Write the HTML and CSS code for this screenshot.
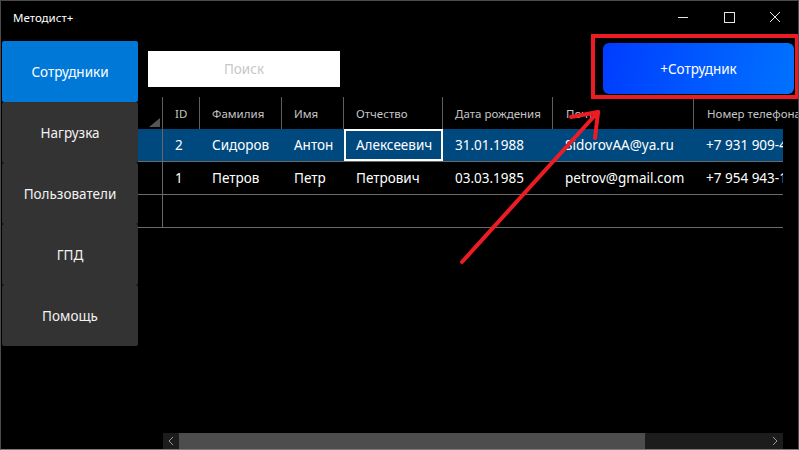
FILE: index.html
```html
<!DOCTYPE html>
<html lang="ru">
<head>
<meta charset="utf-8">
<title>Методист+</title>
<link rel="stylesheet" href="styles.css">
</head>
<body>
<div class="window">
  <header class="titlebar">
    <span class="app-title">Методист+</span>
    <div class="controls">
      <span class="ctl"><svg width="46" height="31" viewBox="0 0 46 31"><line x1="18" y1="16.5" x2="28" y2="16.5"/></svg></span>
      <span class="ctl"><svg width="46" height="31" viewBox="0 0 46 31"><rect x="18.5" y="11.5" width="10" height="10"/></svg></span>
      <span class="ctl"><svg width="46" height="31" viewBox="0 0 46 31"><line x1="18" y1="11" x2="28" y2="21"/><line x1="28" y1="11" x2="18" y2="21"/></svg></span>
    </div>
  </header>
  <div class="main">
    <nav class="sidebar">
      <div class="nav-btn active">Сотрудники</div>
      <div class="nav-btn">Нагрузка</div>
      <div class="nav-btn">Пользователи</div>
      <div class="nav-btn">ГПД</div>
      <div class="nav-btn">Помощь</div>
    </nav>
    <section class="content">
      <div class="toolbar">
        <div class="search">Поиск</div>
        <div class="add-btn">+Сотрудник</div>
      </div>
      <div class="grid">
        <div class="row head">
          <div class="cell rh"><span class="corner"></span></div>
          <div class="cell c-id">ID</div>
          <div class="cell c-fam">Фамилия</div>
          <div class="cell c-name">Имя</div>
          <div class="cell c-otch">Отчество</div>
          <div class="cell c-date">Дата рождения</div>
          <div class="cell c-mail">Почта</div>
          <div class="cell c-tel">Номер телефона</div>
        </div>
        <div class="row data selected">
          <div class="cell rh"></div>
          <div class="cell c-id">2</div>
          <div class="cell c-fam">Сидоров</div>
          <div class="cell c-name">Антон</div>
          <div class="cell c-otch focus">Алексеевич</div>
          <div class="cell c-date">31.01.1988</div>
          <div class="cell c-mail">SidorovAA@ya.ru</div>
          <div class="cell c-tel">+7 931 909-44-21</div>
        </div>
        <div class="row data">
          <div class="cell rh"></div>
          <div class="cell c-id">1</div>
          <div class="cell c-fam">Петров</div>
          <div class="cell c-name">Петр</div>
          <div class="cell c-otch">Петрович</div>
          <div class="cell c-date">03.03.1985</div>
          <div class="cell c-mail">petrov@gmail.com</div>
          <div class="cell c-tel">+7 954 943-12-05</div>
        </div>
        <div class="row data">
          <div class="cell rh"></div>
        </div>
      </div>
      <div class="hscroll">
        <span class="arr">
          <svg width="16" height="16" viewBox="0 0 16 16"><polyline points="10,4 6,8 10,12"/></svg>
        </span>
        <span class="thumb"></span>
        <span class="track"></span>
        <span class="arr">
          <svg width="16" height="16" viewBox="0 0 16 16"><polyline points="6,4 10,8 6,12"/></svg>
        </span>
      </div>
    </section>
  </div>
  <div class="annot-box"></div>
  <svg class="annot-arrow" width="799" height="450" viewBox="0 0 799 450">
    <line x1="462" y1="262" x2="598" y2="112"/>
    <line x1="571" y1="117" x2="598" y2="112"/>
    <line x1="595" y1="138" x2="598" y2="112"/>
  </svg>
</div>
</body>
</html>
```

FILE: styles.css
```css
* { box-sizing: border-box; }

html, body {
  margin: 0;
  padding: 0;
  background: #000;
}

body {
  font-family: "Noto Sans", "Open Sans", "DejaVu Sans", sans-serif;
  color: #fff;
}

.window {
  position: relative;
  width: 799px;
  height: 450px;
  border: 1px solid #4a4a4a;
  border-bottom-color: #7a7a7a;
  background: #000;
  overflow: hidden;
  display: flex;
  flex-direction: column;
}

/* title bar */
.titlebar {
  height: 31px;
  display: flex;
  align-items: center;
  justify-content: space-between;
  flex-shrink: 0;
}

.app-title {
  padding-left: 12px;
  padding-top: 2px;
  font-size: 11.5px;
  color: #fff;
}

.controls {
  display: flex;
  align-self: stretch;
}

.ctl {
  display: flex;
}

.ctl svg line,
.ctl svg rect {
  stroke: #e6e6e6;
  stroke-width: 1;
  fill: none;
}

/* main area */
.main {
  flex: 1;
  display: flex;
  min-height: 0;
}

.sidebar {
  width: 136px;
  margin-left: 1px;
  margin-top: 9px;
  display: flex;
  flex-direction: column;
  align-self: flex-start;
}

.nav-btn {
  height: 61px;
  display: flex;
  align-items: center;
  justify-content: center;
  background: #333;
  color: #f2f2f2;
  font-size: 13.5px;
  border-radius: 2px;
}

.nav-btn.active {
  background: #0078d7;
  color: #fff;
}

.content {
  flex: 1;
  display: flex;
  flex-direction: column;
  min-width: 0;
}

.toolbar {
  height: 65px;
  flex-shrink: 0;
  display: flex;
  align-items: flex-start;
  justify-content: space-between;
  padding-top: 11px;
}

.search {
  margin-left: 10px;
  margin-top: 8px;
  width: 192px;
  height: 36px;
  background: #fff;
  color: #c8c8c8;
  font-size: 13.5px;
  display: flex;
  align-items: center;
  justify-content: center;
}

.add-btn {
  width: 191px;
  height: 51px;
  margin-right: 4px;
  border-radius: 6px;
  background: linear-gradient(100deg, #003cff 0%, #0058ff 50%, #0072ff 100%);
  color: #fff;
  font-size: 13.5px;
  display: flex;
  align-items: center;
  justify-content: center;
}

/* data grid */
.grid {
  flex: 1;
  min-height: 0;
}

.row {
  display: flex;
}

.cell {
  flex-shrink: 0;
  padding-left: 12px;
  white-space: nowrap;
  overflow: hidden;
  display: flex;
  align-items: center;
}

.rh { width: 25px; padding: 0; border-right: 1px solid #686868; position: relative; }
.c-id { width: 37px; }
.c-fam { width: 82px; }
.c-name { width: 62px; }
.c-otch { width: 99px; }
.c-date { width: 110px; }
.c-mail { width: 141px; }
.c-tel { flex: 1; flex-shrink: 1; min-width: 0; }

.row.head {
  height: 32px;
  font-size: 11.5px;
  color: #c4c4c4;
}

.row.head .cell {
  border-right: 1px solid #5e5e5e;
}

.row.head .c-tel {
  border-right: none;
  padding-left: 13px;
}

.row.head .c-mail {
  padding-left: 13px;
}

.corner {
  position: absolute;
  right: 2px;
  bottom: 2px;
  width: 0;
  height: 0;
  border-left: 11px solid transparent;
  border-bottom: 9px solid #555;
}

.row.data {
  width: 645px;
  height: 33px;
  border-bottom: 1px solid #6a6a6a;
  font-size: 13.5px;
  color: #fff;
}

.row.data .cell { height: 100%; }

.row.selected {
  background: #00497f;
}

.cell.focus {
  border: 2px solid #fff;
  padding-left: 10px;
}

/* horizontal scrollbar */
.hscroll {
  height: 16px;
  margin-left: 25px;
  width: 620px;
  flex-shrink: 0;
  display: flex;
  background: #1c1c1c;
}

.arr {
  width: 16px;
  height: 16px;
  display: flex;
}

.arr polyline {
  fill: none;
  stroke: #9a9a9a;
  stroke-width: 1;
}

.thumb {
  width: 466px;
  background: #4d4d4d;
}

.track {
  flex: 1;
}

/* annotation overlays */
.annot-box {
  position: absolute;
  left: 590px;
  top: 33px;
  width: 208px;
  height: 65px;
  border: 4px solid #ed1c24;
}

.annot-arrow {
  position: absolute;
  left: -1px;
  top: -1px;
  pointer-events: none;
}

.annot-arrow line {
  stroke: #ed1c24;
  stroke-width: 4;
  stroke-linecap: round;
}
```
